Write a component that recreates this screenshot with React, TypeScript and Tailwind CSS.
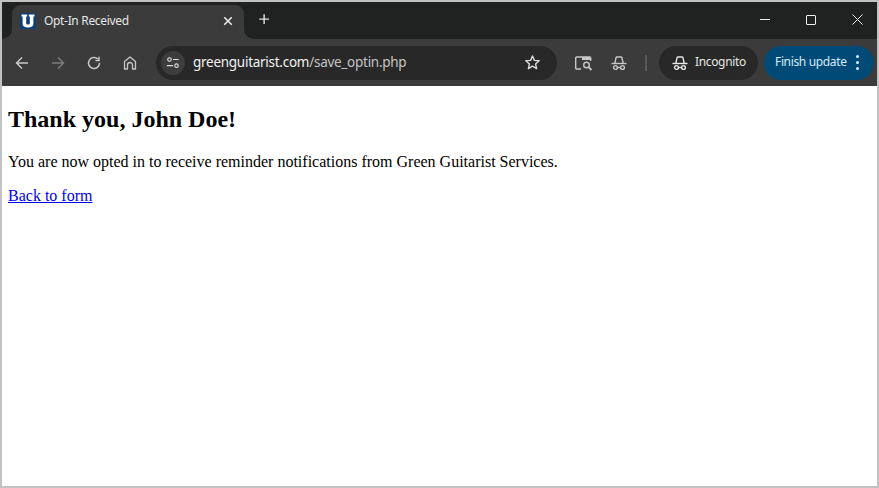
import React from "react";

const ui = "font-['Noto_Sans',sans-serif]";

function Stroke({ size = 16, children, className = "" }: { size?: number; children: React.ReactNode; className?: string }) {
  return (
    <svg width={size} height={size} viewBox="0 0 16 16" fill="none" stroke="currentColor" strokeWidth="1.4" className={className}>
      {children}
    </svg>
  );
}

function Spy({ className = "" }: { className?: string }) {
  return (
    <Stroke className={className}>
      <path d="M.5 8.500h15" />
      <path d="M3.800 8.500 5 2.800q.2-.8 1-.8h4q.8 0 1 .8l1.200 5.700" />
      <circle cx="4.500" cy="12.500" r="1.900" />
      <circle cx="11.500" cy="12.500" r="1.900" />
      <path d="M6.400 12.500h3.200" />
    </Stroke>
  );
}

export default function App() {
  return (
    <div className="w-[879px] h-[488px] border-2 border-[#c2c2c2] bg-white flex flex-col overflow-hidden">
      <div className={`h-[37px] bg-[#202221] flex items-end shrink-0 ${ui}`}>
        <div className="relative ml-[10px] w-[232px] h-[34px] bg-[#3b3b3b] rounded-t-[9px] flex items-center pl-[8px] pr-[10px] pb-[3px] text-[#e6e6e6]">
          <svg width="16" height="16" viewBox="0 0 16 16" className="shrink-0">
            <rect width="16" height="16" fill="#0d3f74" />
            <path d="M1.500 1.500H7.200V3.400H6.200V10c0 1 .6 1.500 1.800 1.500S9.800 11 9.800 10V3.400H8.800V1.500h5.700v1.900h-1.100v7.600c0 2.200-2 3.500-5.400 3.500S2.600 13.200 2.600 11V3.400H1.500z" fill="#ffffff" />
          </svg>
          <span className="ml-[8px] text-[12px] leading-none tracking-[-0.33px] flex-1">Opt-In Received</span>
          <Stroke size={12} className="text-[#eeeeee]">
            <path d="M3 3l10 10M13 3 3 13" strokeWidth="2" />
          </Stroke>
          <svg width="10" height="10" viewBox="0 0 10 10" className="absolute bottom-0 -left-[10px]">
            <path d="M10 0v10H0A10 10 0 0 0 10 0z" fill="#3b3b3b" />
          </svg>
          <svg width="10" height="10" viewBox="0 0 10 10" className="absolute bottom-0 -right-[10px]">
            <path d="M0 0v10h10A10 10 0 0 1 0 0z" fill="#3b3b3b" />
          </svg>
        </div>
        <div className="ml-[14px] mb-[12px] text-[#e3e3e3]">
          <Stroke size={14}>
            <path d="M7 1.500v11M1.500 7h11" strokeWidth="1.600" />
          </Stroke>
        </div>
        <div className="ml-auto flex items-center h-full text-[#ececec]">
          <div className="w-[46px] h-full flex items-center justify-center">
            <div className="w-[10px] h-px bg-[#ececec] -mt-[2px]" />
          </div>
          <div className="w-[46px] h-full flex items-center justify-center">
            <div className="w-[10px] h-[10px] border border-[#ececec] rounded-[1px] -mt-[2px]" />
          </div>
          <div className="w-[43px] pl-[3px] h-full flex items-center justify-center">
            <svg width="11" height="11" viewBox="0 0 11 11" stroke="currentColor" strokeWidth="1" className="-mt-[2px]">
              <path d="M.5.500l10 10M10.500.500l-10 10" />
            </svg>
          </div>
        </div>
      </div>

      <div className={`h-[47px] bg-[#3b3b3b] flex items-center shrink-0 text-[#c7c7c7] ${ui}`}>
        <div className="w-[18px] ml-[12px]">
          <Stroke>
            <path d="M14 8H2.500M8 2.500 2.500 8 8 13.500" strokeWidth="1.500" />
          </Stroke>
        </div>
        <div className="w-[18px] ml-[18px] text-[#7c7c7c]">
          <Stroke>
            <path d="M2 8h11.500M8 2.500 13.500 8 8 13.500" strokeWidth="1.500" />
          </Stroke>
        </div>
        <div className="w-[18px] ml-[18px]">
          <Stroke>
            <path d="M13.500 8A5.500 5.500 0 1 1 11.800 4" strokeWidth="1.500" />
            <path d="M13 1.800v3.600H9.400" strokeWidth="1.500" />
          </Stroke>
        </div>
        <div className="w-[18px] ml-[18px]">
          <Stroke>
            <path d="M2.500 14V6.500L8 2l5.500 4.500V14h-3V10a2.500 2.500 0 0 0-5 0v4z" strokeWidth="1.300" strokeLinejoin="round" />
          </Stroke>
        </div>
        <div className="ml-[16px] w-[401px] h-[34px] rounded-full bg-[#282828] flex items-center pl-[5px] pr-[16px]">
          <div className="w-[24px] h-[24px] rounded-full bg-[#3d3d3d] flex items-center justify-center text-[#dddddd]">
            <Stroke size={14}>
              <circle cx="4" cy="4" r="2" strokeWidth="1.300" />
              <path d="M8 4h6.500M1 11h7" strokeWidth="1.300" />
              <circle cx="12" cy="11" r="2" strokeWidth="1.300" />
            </Stroke>
          </div>
          <div className="ml-[8px] flex-1 text-[13.5px] leading-none tracking-[-0.27px]">
            <span className="text-[#f2f2f2]">greenguitarist.com</span>
            <span className="text-[#c4c4c4]">/save_optin.php</span>
          </div>
          <Stroke size={17} className="text-[#dddddd]">
            <path d="M8 1.800 9.800 6l4.500.4-3.400 3 1 4.400L8 11.500l-3.900 2.300 1-4.400-3.400-3L6.200 6z" strokeWidth="1.300" strokeLinejoin="round" />
          </Stroke>
        </div>
        <div className="ml-[17px] w-[20px]">
          <svg width="20" height="16" viewBox="0 0 20 16" fill="none" stroke="currentColor" strokeWidth="1.400">
            <path d="M7 14H2.700a1 1 0 0 1-1-1V3a1 1 0 0 1 1-1h13a1 1 0 0 1 1 1v3" />
            <path d="M8 2h8.300v3H8z" fill="currentColor" stroke="none" />
            <circle cx="12.500" cy="10" r="2.800" />
            <path d="M14.500 12l3 3" strokeWidth="1.800" />
          </svg>
        </div>
        <div className="ml-[17px] w-[16px]">
          <Spy />
        </div>
        <div className="ml-[18px] w-[2px] h-[16px] bg-[#595959]" />
        <div className="ml-[12px] w-[99px] h-[34px] rounded-full bg-[#282828] flex items-center pl-[13px] text-[#e6e6e6]">
          <Spy />
          <span className="ml-[7px] text-[12px] leading-none tracking-[-0.35px] -mt-[1px]">Incognito</span>
        </div>
        <div className="ml-[6px] w-[110px] h-[34px] rounded-full bg-[#004a77] flex items-center pl-[11px] text-[#d6ebf9]">
          <span className="text-[12px] leading-none tracking-[-0.35px] -mt-[1px] whitespace-nowrap">Finish update</span>
          <div className="ml-[9px] flex flex-col gap-[3px]">
            <div className="w-[3px] h-[3px] rounded-full bg-[#d6ebf9]" />
            <div className="w-[3px] h-[3px] rounded-full bg-[#d6ebf9]" />
            <div className="w-[3px] h-[3px] rounded-full bg-[#d6ebf9]" />
          </div>
        </div>
      </div>

      <div className="flex-1 pl-[6px] pt-[20px] font-['Liberation_Serif',serif] text-black">
        <h1 className="text-[24px] leading-[27px] font-bold">Thank you, John Doe!</h1>
        <p className="mt-[20px] text-[16px] leading-[18px]">You are now opted in to receive reminder notifications from Green Guitarist Services.</p>
        <p className="mt-[16px] text-[16px] leading-[18px]">
          <a href="#" className="text-[#0000ee] underline">Back to form</a>
        </p>
      </div>
    </div>
  );
}
